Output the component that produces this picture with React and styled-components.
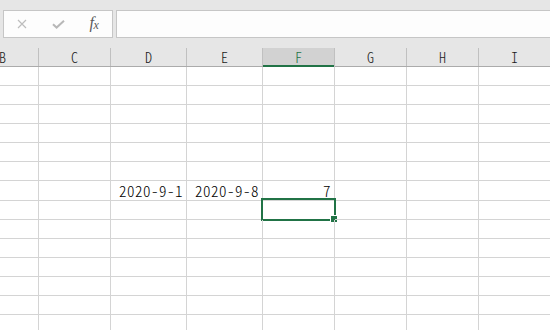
import React from 'react'
import styled, { createGlobalStyle } from 'styled-components'

const columns = [
  { name: 'B', width: 72 },
  { name: 'C', width: 72 },
  { name: 'D', width: 76 },
  { name: 'E', width: 76 },
  { name: 'F', width: 72 },
  { name: 'G', width: 72 },
  { name: 'H', width: 72 },
  { name: 'I', width: 72 },
]

const template = columns.map(c => `${c.width}px`).join(' ')

// row heights in px (border included); the 8th row is a little taller
const rows = [19, 19, 19, 19, 19, 19, 19, 20, 19, 19, 19, 19, 19, 19]

const values = {
  '6-D': '2020-9-1',
  '6-E': '2020-9-8',
  '6-F': '7',
}

const selected = '7-F'

export default function App() {
  return (
    <>
      <GlobalStyle />
      <Page>
        <FormulaBar>
          <Actions>
            <IconSlot>
              <svg width="10" height="10" viewBox="0 0 10 10">
                <path d="M1 1 L9 9 M9 1 L1 9" stroke="#bdbdbd" strokeWidth="1.2" fill="none" />
              </svg>
            </IconSlot>
            <IconSlot>
              <svg width="13" height="9" viewBox="0 0 13 9">
                <path d="M1 4.2 L4.6 7.6 L12 0.8" stroke="#b8b8b8" strokeWidth="2" fill="none" />
              </svg>
            </IconSlot>
            <IconSlot>
              <Fx>f<sub>x</sub></Fx>
            </IconSlot>
          </Actions>
          <Input />
        </FormulaBar>
        <Sheet>
          <HeaderRow>
            {columns.map(c => (
              <HeaderCell key={c.name} $active={c.name === 'F'}>{c.name}</HeaderCell>
            ))}
          </HeaderRow>
          {rows.map((h, r) => (
            <Row key={r} $h={h}>
              {columns.map(c => {
                const key = `${r}-${c.name}`
                return (
                  <Cell key={key}>
                    {values[key]}
                    {key === selected && (
                      <Selection>
                        <Handle />
                      </Selection>
                    )}
                  </Cell>
                )
              })}
            </Row>
          ))}
        </Sheet>
      </Page>
    </>
  )
}

const GlobalStyle = createGlobalStyle`
  html, body {
    margin: 0;
    padding: 0;
    background: #ffffff;
    overflow: hidden;
  }
  * {
    box-sizing: border-box;
  }
`

const Page = styled.div`
  width: 550px;
  height: 330px;
  overflow: hidden;
  background: #ffffff;
  font-family: "Noto Sans CJK JP", "DejaVu Sans", sans-serif;
  font-feature-settings: "hwid";
  color: #000;
`

const FormulaBar = styled.div`
  height: 48px;
  background: #e6e6e6;
  display: flex;
  gap: 3px;
  padding: 10px 0 10px 3px;
`

const Actions = styled.div`
  width: 110px;
  height: 28px;
  border: 1px solid #c6c6c6;
  background: #fdfdfd;
  display: flex;
  align-items: center;
`

const IconSlot = styled.div`
  width: 36px;
  display: flex;
  align-items: center;
  justify-content: center;
`

const Fx = styled.span`
  font-family: "Liberation Serif", serif;
  font-style: italic;
  font-size: 16px;
  line-height: 15px;
  color: #5a5a5a;
  letter-spacing: -0.5px;

  sub {
    font-size: 12px;
    vertical-align: -1px;
  }
`

const Input = styled.div`
  flex: 1;
  height: 28px;
  border: 1px solid #c6c6c6;
  border-right: none;
  background: #fdfdfd;
`

const Sheet = styled.div`
  margin-left: -33px;
`

const HeaderRow = styled.div`
  display: grid;
  grid-template-columns: ${template};
  height: 19px;
  background: #e6e6e6;
  border-bottom: 1px solid #ababab;
`

const HeaderCell = styled.div`
  border-right: 1px solid #c0c0c0;
  text-align: center;
  font-size: 14px;
  font-weight: 300;
  line-height: 18px;
  color: ${p => (p.$active ? '#217346' : '#1a1a1a')};
  background: ${p => (p.$active ? '#d2d2d2' : 'transparent')};
  box-shadow: ${p => (p.$active ? 'inset 0 -2px 0 #217346' : 'none')};
  margin-bottom: ${p => (p.$active ? '-1px' : '0')};
`

const Row = styled.div`
  display: grid;
  grid-template-columns: ${template};
  height: ${p => p.$h}px;
`

const Cell = styled.div`
  position: relative;
  border-right: 1px solid #d4d4d4;
  border-bottom: 1px solid #d4d4d4;
  text-align: right;
  padding: 1px 3px 0 0;
  font-size: 15px;
  font-weight: 300;
  line-height: 18px;
  letter-spacing: 0.5px;
  white-space: nowrap;
`

const Selection = styled.div`
  position: absolute;
  top: -2px;
  left: -2px;
  right: -2px;
  bottom: -2px;
  border: 2px solid #217346;
`

const Handle = styled.div`
  position: absolute;
  right: -4px;
  bottom: -4px;
  width: 8px;
  height: 8px;
  background: #217346;
  border: 1px solid #ffffff;
`
